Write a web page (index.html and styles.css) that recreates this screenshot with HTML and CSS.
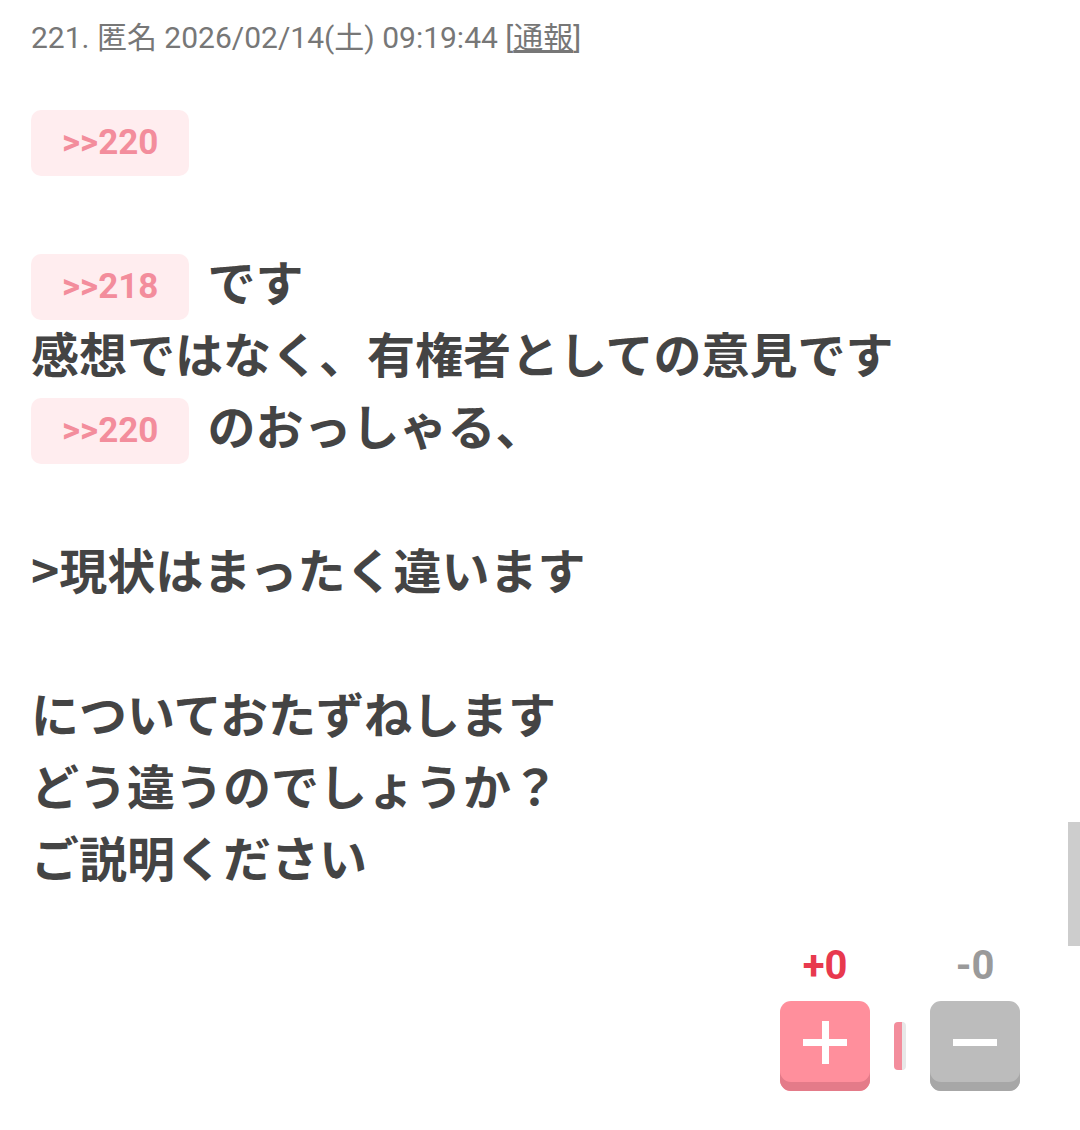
FILE: index.html
```html
<!DOCTYPE html>
<html lang="ja">
  <head>
    <meta charset="UTF-8" />
    <meta name="viewport" content="width=device-width, initial-scale=1.0" />
    <title>221. 匿名</title>
    <link rel="stylesheet" href="styles.css">
  </head>
  <body>
    <div class="comment">
      <div class="comment-head">
        221. 匿名 2026/02/14(土) 09:19:44 [<a class="report" href="#">通報</a>]
      </div>

      <div class="comment-body">
        <div class="line"><a class="anchor" href="#">&gt;&gt;220</a></div>
        <div class="line"></div>
        <div class="line"><a class="anchor" href="#">&gt;&gt;218</a><span>です</span></div>
        <div class="line">感想ではなく、有権者としての意見です</div>
        <div class="line"><a class="anchor" href="#">&gt;&gt;220</a><span>のおっしゃる、</span></div>
        <div class="line"></div>
        <div class="line">&gt;現状はまったく違います</div>
        <div class="line"></div>
        <div class="line">についておたずねします</div>
        <div class="line">どう違うのでしょうか？</div>
        <div class="line">ご説明ください</div>
      </div>

      <div class="vote">
        <div class="vote-col">
          <div class="vote-count plus">+0</div>
          <button class="vote-btn plus" aria-label="プラス">
            <span class="sign-h"></span><span class="sign-v"></span>
          </button>
        </div>
        <div class="vote-sep"></div>
        <div class="vote-col">
          <div class="vote-count minus">-0</div>
          <button class="vote-btn minus" aria-label="マイナス">
            <span class="sign-h"></span>
          </button>
        </div>
      </div>
    </div>

    <div class="scroll-thumb"></div>
  </body>
</html>
```

FILE: styles.css
```css
html, body {
  margin: 0;
  padding: 0;
  background: #fff;
  overflow: hidden;
}
body {
  font-family: Roboto, "Noto Sans CJK JP", sans-serif;
  color: #444;
}
.comment {
  padding: 18px 31px 0;
}
.comment-head {
  font-size: 30px;
  line-height: 40px;
  color: #777;
}
.report {
  color: #777;
  text-decoration: underline;
}
.comment-body {
  margin-top: 49px;
  font-family: "Noto Sans CJK JP", sans-serif;
  font-weight: bold;
  font-size: 48px;
}
.line {
  box-sizing: border-box;
  height: 72px;
  padding-bottom: 14px;
  display: flex;
  align-items: center;
  white-space: nowrap;
}
.anchor {
  display: inline-block;
  height: 66px;
  line-height: 66px;
  padding: 0 31px;
  margin: 14px 18px 0 0;
  border-radius: 10px;
  background: #ffedef;
  color: #f38d9c;
  font-family: Roboto, sans-serif;
  font-size: 35px;
  font-weight: bold;
  text-decoration: none;
}
.vote {
  display: flex;
  justify-content: flex-end;
  align-items: flex-end;
  gap: 24px;
  margin-top: 45px;
  padding-right: 29px;
}
.vote-col {
  display: flex;
  flex-direction: column;
  align-items: center;
}
.vote-count {
  font-size: 40px;
  font-weight: bold;
  line-height: 44px;
  margin-bottom: 13px;
}
.vote-count.plus {
  color: #e8394e;
}
.vote-count.minus {
  color: #9a9a9a;
}
.vote-btn {
  position: relative;
  width: 90px;
  height: 90px;
  border: none;
  border-radius: 11px;
  padding: 0;
  cursor: pointer;
}
.vote-btn.plus {
  background: #ff8f9c;
  box-shadow: inset 0 -9px 0 #e47b89;
}
.vote-btn.minus {
  background: #bcbcbc;
  box-shadow: inset 0 -9px 0 #a7a7a7;
}
.sign-h, .sign-v {
  position: absolute;
  background: #fff;
}
.sign-h {
  left: 23px;
  top: 38px;
  width: 44px;
  height: 7px;
}
.sign-v {
  left: 42px;
  top: 20px;
  width: 7px;
  height: 43px;
}
.vote-sep {
  width: 8px;
  height: 48px;
  margin-bottom: 21px;
  border-right: 4px solid #e8e8e8;
  border-radius: 4px;
  background: #f38d9c;
}
.scroll-thumb {
  position: fixed;
  right: 0;
  top: 822px;
  width: 12px;
  height: 124px;
  background: #cdcdcd;
}
```
